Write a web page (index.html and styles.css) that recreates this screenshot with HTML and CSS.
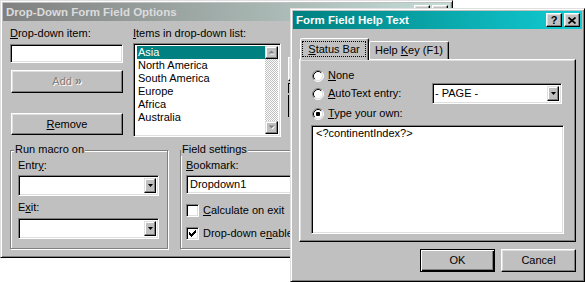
FILE: index.html
```html
<!DOCTYPE html>
<html>
<head>
<meta charset="utf-8">
<title>Form Field Options</title>
<link rel="stylesheet" href="styles.css">
</head>
<body>
<div class="win win1">
  <div class="titlebar inactive">
    <span class="title">Drop-Down Form Field Options</span>
    <div class="capbtns">
      <span class="capbtn q">?</span>
      <span class="capbtn"><svg width="8" height="7" viewBox="0 0 8 7"><path d="M0.5 0.5L7.5 6.5M7.5 0.5L0.5 6.5" stroke="#000" stroke-width="1.7"/></svg></span>
    </div>
  </div>
  <div class="d1-body">
    <div class="d1-top">
      <div class="col-left">
        <div class="lbl"><u>D</u>rop-down item:</div>
        <div class="field item-input"></div>
        <div class="btn btn-add disabled"><span>Add&nbsp;<span class="raquo">»</span></span></div>
        <div class="btn btn-remove"><span><u>R</u>emove</span></div>
      </div>
      <div class="col-list">
        <div class="lbl"><u>I</u>tems in drop-down list:</div>
        <div class="field listbox">
          <div class="list-items">
            <div class="item sel">Asia</div>
            <div class="item">North America</div>
            <div class="item">South America</div>
            <div class="item">Europe</div>
            <div class="item">Africa</div>
            <div class="item">Australia</div>
          </div>
          <div class="vscroll">
            <div class="sbtn"><svg width="7" height="5" viewBox="0 0 7 5"><path d="M1.5 4.5L4.5 1.5L7 4.5Z" fill="#fff"/><path d="M0.5 3.5L3.5 0.5L6.5 3.5Z" fill="#808080"/></svg></div>
            <div class="track"></div>
            <div class="sbtn"><svg width="7" height="5" viewBox="0 0 7 5"><path d="M1.5 1.5L7 1.5L4.5 4.5Z" fill="#fff"/><path d="M0.5 0.5L6.5 0.5L3.5 3.5Z" fill="#808080"/></svg></div>
          </div>
        </div>
      </div>
      <div class="col-move">
        <div class="btn mv-btn"></div>
        <div class="mv-a"></div>
        <div class="mv-b"></div>
      </div>
    </div>
    <div class="d1-bottom">
      <div class="group g-macro">
        <span class="legend">Run macro on</span>
        <div class="lbl">Entr<u>y</u>:</div>
        <div class="field combo macro-combo"><span class="combo-text"></span><span class="btn ddbtn"><svg width="5" height="3" viewBox="0 0 5 3"><path d="M0 0H5L2.5 3Z" fill="#000"/></svg></span></div>
        <div class="lbl lbl-exit">E<u>x</u>it:</div>
        <div class="field combo macro-combo exit-combo"><span class="combo-text"></span><span class="btn ddbtn"><svg width="5" height="3" viewBox="0 0 5 3"><path d="M0 0H5L2.5 3Z" fill="#000"/></svg></span></div>
      </div>
      <div class="group g-field">
        <span class="legend legend-field">Field settings</span>
        <div class="lbl"><u>B</u>ookmark:</div>
        <div class="field bookmark"><span>Dropdown1</span></div>
        <div class="chk-row first">
          <span class="chk"></span>
          <span class="chk-label"><u>C</u>alculate on exit</span>
        </div>
        <div class="chk-row">
          <span class="chk"><svg width="7" height="7" viewBox="0 0 7 7"><path d="M0 2h1v3h-1zM1 3h1v3h-1zM2 4h1v3h-1zM3 3h1v3h-1zM4 2h1v3h-1zM5 1h1v3h-1zM6 0h1v3h-1z" fill="#000"/></svg></span>
          <span class="chk-label">Drop-down e<u>n</u>abled</span>
        </div>
      </div>
    </div>
  </div>
</div>

<div class="win win2">
  <div class="titlebar active">
    <span class="title">Form Field Help Text</span>
    <div class="capbtns">
      <span class="capbtn q">?</span>
      <span class="capbtn"><svg width="8" height="7" viewBox="0 0 8 7"><path d="M0.5 0.5L7.5 6.5M7.5 0.5L0.5 6.5" stroke="#000" stroke-width="1.7"/></svg></span>
    </div>
  </div>
  <div class="d2-body">
    <div class="tabs">
      <div class="tab sel"><span class="focus"><span><u>S</u>tatus Bar</span></span></div>
      <div class="tab"><span>Help <u>K</u>ey (F1)</span></div>
    </div>
    <div class="tabpanel">
      <div class="rrow">
        <svg class="radio" width="12" height="12" viewBox="0 0 12 12"><circle cx="6" cy="6" r="5" fill="#fff"/><path d="M2.11 9.89A5.5 5.5 0 0 1 9.89 2.11" stroke="#808080" fill="none"/><path d="M9.89 2.11A5.5 5.5 0 0 1 2.11 9.89" stroke="#fff" fill="none"/><path d="M2.82 9.18A4.5 4.5 0 0 1 9.18 2.82" stroke="#000" fill="none"/><path d="M9.18 2.82A4.5 4.5 0 0 1 2.82 9.18" stroke="#dfdfdf" fill="none"/></svg>
        <span class="rlabel"><u>N</u>one</span>
      </div>
      <div class="rrow r2">
        <svg class="radio" width="12" height="12" viewBox="0 0 12 12"><circle cx="6" cy="6" r="5" fill="#fff"/><path d="M2.11 9.89A5.5 5.5 0 0 1 9.89 2.11" stroke="#808080" fill="none"/><path d="M9.89 2.11A5.5 5.5 0 0 1 2.11 9.89" stroke="#fff" fill="none"/><path d="M2.82 9.18A4.5 4.5 0 0 1 9.18 2.82" stroke="#000" fill="none"/><path d="M9.18 2.82A4.5 4.5 0 0 1 2.82 9.18" stroke="#dfdfdf" fill="none"/></svg>
        <span class="rlabel wide"><u>A</u>utoText entry:</span>
        <div class="field combo page-combo"><span class="combo-text">- PAGE -</span><span class="btn ddbtn"><svg width="5" height="3" viewBox="0 0 5 3"><path d="M0 0H5L2.5 3Z" fill="#000"/></svg></span></div>
      </div>
      <div class="rrow r3">
        <svg class="radio" width="12" height="12" viewBox="0 0 12 12"><circle cx="6" cy="6" r="5" fill="#fff"/><path d="M2.11 9.89A5.5 5.5 0 0 1 9.89 2.11" stroke="#808080" fill="none"/><path d="M9.89 2.11A5.5 5.5 0 0 1 2.11 9.89" stroke="#fff" fill="none"/><path d="M2.82 9.18A4.5 4.5 0 0 1 9.18 2.82" stroke="#000" fill="none"/><path d="M9.18 2.82A4.5 4.5 0 0 1 2.82 9.18" stroke="#dfdfdf" fill="none"/><rect x="4" y="4" width="4" height="4" rx="1" fill="#000"/></svg>
        <span class="rlabel"><u>T</u>ype your own:</span>
      </div>
      <div class="field textarea">&lt;?continentIndex?&gt;</div>
    </div>
    <div class="btnrow">
      <div class="btn dlgbtn default">OK</div>
      <div class="btn dlgbtn">Cancel</div>
    </div>
  </div>
</div>
</body>
</html>
```

FILE: styles.css
```css
* { box-sizing: border-box; }

html, body { margin: 0; padding: 0; }

body {
  width: 585px;
  height: 282px;
  background: #fff;
  position: relative;
  overflow: hidden;
  font-family: "Liberation Sans", Arial, sans-serif;
  font-size: 11px;
  line-height: 13px;
  color: #000;
}

u { text-decoration: underline; text-underline-offset: 1px; }

/* windows on the desktop */
.win {
  position: absolute;
  background: #c0c0c0;
  border: 1px solid;
  border-color: #dfdfdf #000 #000 #dfdfdf;
  box-shadow: inset 1px 1px #fff, inset -1px -1px #808080;
  padding: 2px;
  display: flex;
  flex-direction: column;
}
.win1 { left: 0; top: 0; width: 453px; height: 258px; }
.win2 { left: 290px; top: 8px; width: 295px; height: 274px; }

.titlebar {
  height: 18px;
  flex: none;
  display: flex;
  align-items: center;
  padding: 0 2px 0 3px;
}
.titlebar .title {
  font-weight: bold;
  font-size: 11.5px;
  white-space: nowrap;
}
.titlebar.active { background: linear-gradient(to right, #008080, #12ccd4); color: #fff; }
.titlebar.inactive { background: linear-gradient(to right, #808080, #c4ddd6); color: #dcdcdc; }

.capbtns { margin-left: auto; display: flex; gap: 2px; }
.capbtn {
  width: 16px;
  height: 14px;
  background: #c0c0c0;
  border: 1px solid;
  border-color: #fff #000 #000 #fff;
  box-shadow: inset -1px -1px #808080, inset 1px 1px #dfdfdf;
  display: flex;
  align-items: center;
  justify-content: center;
  color: #000;
}
.capbtn.q { font-weight: bold; font-size: 11px; line-height: 11px; padding-top: 1px; }

/* common controls */
.lbl { height: 13px; white-space: nowrap; }

.field {
  background: #fff;
  border: 1px solid;
  border-color: #808080 #fff #fff #808080;
  box-shadow: inset 1px 1px #000, inset -1px -1px #dfdfdf;
}

.btn {
  background: #c0c0c0;
  border: 1px solid;
  border-color: #fff #000 #000 #fff;
  box-shadow: inset -1px -1px #808080, inset 1px 1px #dfdfdf;
  display: flex;
  align-items: center;
  justify-content: center;
  white-space: nowrap;
}
.btn.disabled { color: #808080; text-shadow: 1px 1px #fff; }
.raquo { font-weight: bold; font-size: 12px; }

/* dialog 1 */
.d1-body { padding: 6px 0 0 7px; }
.d1-top { display: flex; align-items: flex-start; }

.col-left { width: 113px; display: flex; flex-direction: column; }
.item-input { margin-top: 4px; height: 19px; }
.btn-add { margin: 7px 0 0 1px; width: 112px; height: 23px; }
.btn-remove { margin: 20px 0 0 1px; width: 112px; height: 22px; }

.col-list { margin-left: 10px; width: 150px; }
.listbox { margin-top: 3px; width: 148px; height: 94px; display: flex; padding: 2px; }
.list-items { flex: 1; padding-left: 1px; }
.item { height: 13px; padding-left: 1px; white-space: nowrap; }
.item.sel { background: #008080; color: #fff; }
.vscroll {
  width: 13px;
  display: flex;
  flex-direction: column;
  background: repeating-conic-gradient(#c0c0c0 0 25%, #fff 0 50%) 0 0 / 2px 2px;
}
.sbtn {
  height: 13px;
  background: #c0c0c0;
  border: 1px solid;
  border-color: #dfdfdf #000 #000 #dfdfdf;
  box-shadow: inset -1px -1px #808080, inset 1px 1px #fff;
  display: flex;
  align-items: center;
  justify-content: center;
}
.track { flex: 1; }

.col-move { margin-left: 5px; padding-top: 30px; width: 40px; }
.mv-btn { height: 24px; width: 40px; }
.mv-a { margin-top: 2px; height: 10px; border-left: 1px solid #000; border-top: 1px solid #000; }
.mv-b { margin-top: 2px; height: 22px; border-left: 1px solid #000; }

.d1-bottom { display: flex; margin-top: 13px; }
.group {
  position: relative;
  border: 1px solid #808080;
  box-shadow: inset 1px 1px #fff, 1px 1px #fff;
  height: 99px;
  display: flex;
  flex-direction: column;
  align-items: flex-start;
}
.legend {
  position: absolute;
  top: -8px;
  left: 3px;
  padding: 0 1px;
  background: #c0c0c0;
  white-space: nowrap;
}
.legend-field { left: 0; }

.g-macro { width: 158px; padding: 8px 0 0 7px; }
.g-field { width: 262px; margin-left: 12px; padding: 8px 0 0 5px; }

.combo { display: flex; align-items: stretch; padding: 2px; }
.combo-text { flex: 1; display: flex; align-items: center; white-space: nowrap; }
.ddbtn { width: 12px; flex: none; border-color: #dfdfdf #000 #000 #dfdfdf; box-shadow: inset -1px -1px #808080, inset 1px 1px #fff; }
.macro-combo { margin-top: 3px; width: 141px; height: 21px; }
.lbl-exit { margin-top: 5px; }
.exit-combo { margin-top: 4px; }

.bookmark {
  margin-top: 3px;
  width: 256px;
  height: 19px;
  display: flex;
  align-items: center;
  padding-left: 3px;
}

.chk-row { display: flex; align-items: center; height: 13px; margin-top: 10px; white-space: nowrap; }
.chk {
  width: 13px;
  height: 13px;
  flex: none;
  background: #fff;
  border: 1px solid;
  border-color: #808080 #fff #fff #808080;
  box-shadow: inset 1px 1px #000, inset -1px -1px #dfdfdf;
  display: flex;
  align-items: center;
  justify-content: center;
}
.chk-label { margin-left: 4px; }

/* dialog 2 */
.d2-body { padding: 9px 6px 0 6px; display: flex; flex-direction: column; }
.tabs { display: flex; align-items: flex-end; height: 21px; position: relative; z-index: 1; }
.tab {
  background: #c0c0c0;
  border: 1px solid;
  border-bottom: none;
  border-color: #fff #000 transparent #fff;
  border-radius: 2px 2px 0 0;
  box-shadow: inset -1px 0 #808080;
  width: 80px;
  height: 18px;
  display: flex;
  align-items: center;
  justify-content: center;
  white-space: nowrap;
}
.tab.sel {
  margin-left: 1px;
  width: 69px;
  height: 22px;
  margin-bottom: -1px;
  align-items: flex-start;
  justify-content: flex-start;
  padding: 2px 0 0 1px;
}
.focus {
  width: 64px;
  height: 16px;
  border: 1px dotted #000;
  display: flex;
  align-items: center;
  justify-content: center;
}

.tabpanel {
  height: 183px;
  border: 1px solid;
  border-color: #fff #000 #000 #fff;
  box-shadow: inset -1px -1px #808080, inset 1px 1px #dfdfdf;
  padding: 9px 0 0 12px;
  display: flex;
  flex-direction: column;
}
.rrow { display: flex; align-items: center; height: 13px; white-space: nowrap; }
.rrow.r2 { height: 21px; margin-top: 1px; }
.rrow.r3 { margin-top: 3px; }
.radio { flex: none; }
.rlabel { margin-left: 4px; }
.rlabel.wide { width: 104px; }
.page-combo { width: 130px; height: 21px; }
.page-combo .combo-text { padding-left: 0; }

.textarea {
  margin: 5px 0 0 -1px;
  width: 253px;
  height: 109px;
  padding: 1px 0 0 4px;
  line-height: 12px;
}

.btnrow { display: flex; justify-content: flex-end; gap: 6px; margin-top: 7px; }
.dlgbtn { width: 75px; height: 23px; }
.dlgbtn.default {
  border: 1px solid #000;
  box-shadow: inset 1px 1px #fff, inset -1px -1px #000, inset -2px -2px #808080;
}
```
